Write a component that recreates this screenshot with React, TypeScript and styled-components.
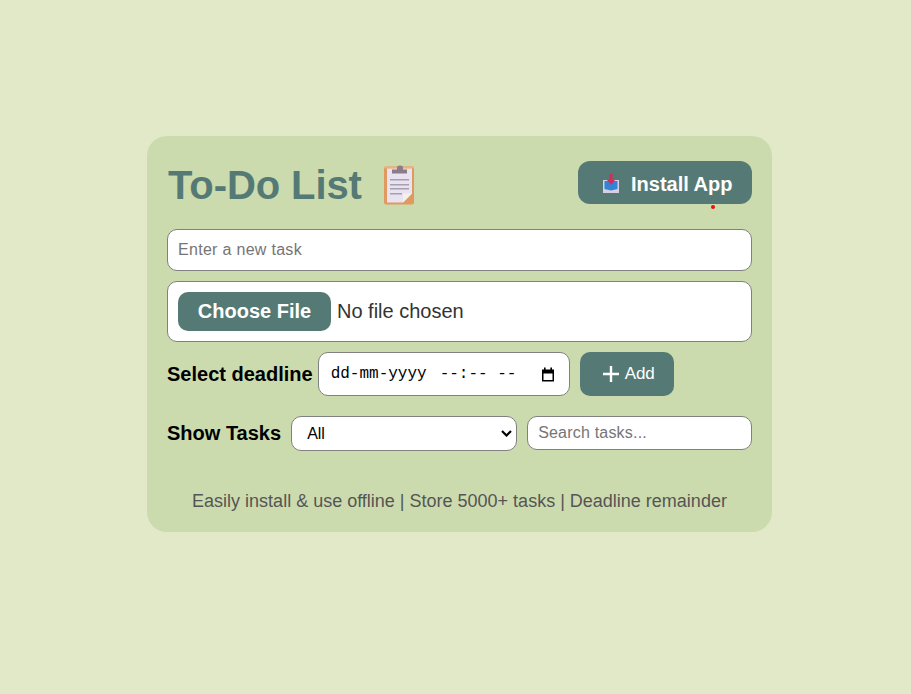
import React from 'react';
import styled, { createGlobalStyle } from 'styled-components';

const GlobalStyle = createGlobalStyle`
  html, body {
    margin: 0;
    height: 100%;
  }
  body {
    background-color: #e1e9c9;
    font-family: "Liberation Sans", Arial, sans-serif;
  }
  * {
    box-sizing: border-box;
  }
`;

const Page = styled.div`
  display: flex;
  justify-content: center;
  padding: 136px 139px 0 147px;
`;

const Card = styled.div`
  width: 625px;
  height: 396px;
  padding: 25px 20px 0;
  background-color: #ccdbae;
  border-radius: 20px;
`;

const Header = styled.div`
  display: flex;
  justify-content: space-between;
  align-items: flex-start;
  height: 68px;
`;

const Title = styled.h1`
  display: flex;
  align-items: center;
  gap: 21px;
  height: 48px;
  margin: 0 0 0 1px;
  font-size: 40px;
  font-weight: 700;
  letter-spacing: -0.1px;
  color: #557a75;
`;

const InstallButton = styled.button`
  position: relative;
  display: flex;
  align-items: center;
  gap: 11px;
  width: 174px;
  height: 43px;
  padding: 3px 0 0 24px;
  border: none;
  border-radius: 12px;
  background-color: #557a75;
  color: #fff;
  font-family: inherit;
  font-size: 20px;
  font-weight: 700;
`;

const RedDot = styled.span`
  position: absolute;
  left: 133px;
  top: 44px;
  width: 4px;
  height: 4px;
  border-radius: 50%;
  background-color: #f00d0d;
`;

const TextField = styled.input`
  display: block;
  width: 100%;
  height: 42px;
  padding: 0 10px;
  border: 1px solid #808080;
  border-radius: 10px;
  background: #fff;
  font-family: inherit;
  font-size: 16px;
  &::placeholder {
    color: #757575;
    letter-spacing: 0.3px;
  }
`;

const FileBox = styled.div`
  display: flex;
  align-items: center;
  gap: 6px;
  height: 61px;
  margin-top: 10px;
  padding: 0 10px;
  border: 1px solid #808080;
  border-radius: 10px;
  background: #fff;
  font-size: 20px;
  color: #333;
`;

const ChooseFile = styled.span`
  display: flex;
  align-items: center;
  justify-content: center;
  width: 153px;
  height: 39px;
  border-radius: 10px;
  background-color: #557a75;
  color: #fff;
  font-weight: 700;
`;

const Row = styled.div<{ $top: number }>`
  display: flex;
  align-items: center;
  gap: 10px;
  margin-top: ${(props) => props.$top}px;
`;

const Label = styled.label`
  flex-shrink: 0;
  font-size: 20px;
  font-weight: 700;
  color: #000;
  white-space: nowrap;
`;

const DateBox = styled.div`
  display: flex;
  align-items: center;
  width: 252px;
  height: 44px;
  margin-left: -5px;
  padding: 0 14px 0 12px;
  border: 1px solid #808080;
  border-radius: 10px;
  background: #fff;
  font-family: "Liberation Mono", monospace;
  font-size: 16px;
  color: #000;
`;

const DatePart = styled.span`
  margin-right: 13px;
`;

const TimePart = styled.span`
  flex: 1;
`;

const AddButton = styled.button`
  display: flex;
  align-items: center;
  justify-content: center;
  gap: 6px;
  width: 94px;
  height: 44px;
  padding: 0 0 0 4px;
  border: none;
  border-radius: 10px;
  background-color: #557a75;
  color: #fff;
  font-family: inherit;
  font-size: 17px;
  letter-spacing: -0.2px;
`;

const SelectWrap = styled.div`
  position: relative;
  flex-shrink: 0;
  width: 226px;
  height: 35px;
`;

const FilterSelect = styled.select`
  appearance: none;
  width: 100%;
  height: 100%;
  padding: 0 15px;
  border: 1px solid #808080;
  border-radius: 10px;
  background: #fff;
  color: #000;
  font-family: inherit;
  font-size: 16px;
`;

const SelectArrow = styled.svg`
  position: absolute;
  right: 5px;
  top: 14px;
  pointer-events: none;
`;

const SearchField = styled(TextField)`
  width: 225px;
  height: 34px;
  align-self: flex-start;
  &::placeholder {
    letter-spacing: 0.2px;
  }
`;

const Footer = styled.p`
  margin: 40px 0 0;
  text-align: center;
  font-size: 18px;
  color: #555;
`;

const ClipboardIcon = () => (
  <svg width="34" height="41" viewBox="0 0 34 41">
    <rect x="1" y="1.500" width="30" height="38" rx="2" fill="#e0995f" />
    <rect x="1.500" y="1.500" width="29" height="2" fill="#eeb27c" />
    <path d="M4 3.500h25v25l-9 9H4z" fill="#e8e2f1" />
    <path d="M20 37.500l9-9h-9z" fill="#f5f0ea" />
    <path d="M9 8.500V4.500h5V2.500a3 2 0 0 1 6 0V4.500h4v4z" fill="#8a7d8a" />
    <rect x="7" y="14" width="19" height="1.500" fill="#a59fae" />
    <rect x="7" y="19" width="19" height="1.500" fill="#a59fae" />
    <rect x="7" y="23" width="19" height="1.500" fill="#a59fae" />
    <rect x="7" y="28" width="12" height="1.500" fill="#a59fae" />
  </svg>
);

const InstallIcon = () => (
  <svg width="18" height="20" viewBox="0 1 18 20">
    <path d="M1 7h16v13H1z" fill="#d9cfe4" />
    <path d="M2.500 8h13v8l-6.500 1.500L2.500 16z" fill="#2f86d6" />
    <path d="M7.500 0h3v7H13l-4 5-4-5h2.500z" fill="#d42a5c" />
  </svg>
);

const CalendarIcon = () => (
  <svg width="14" height="15" viewBox="0 0 14 15">
    <path d="M1 2.500h12v12H1z M2.500 6.500v6.500h9V6.500z" fill="#000" fillRule="evenodd" />
    <rect x="3" y="0.500" width="1.600" height="2.500" fill="#000" />
    <rect x="9.400" y="0.500" width="1.600" height="2.500" fill="#000" />
  </svg>
);

const PlusIcon = () => (
  <svg width="16" height="16" viewBox="0 0 16 16">
    <path d="M6.800 0h2.400v6.800H16v2.400H9.200V16H6.800V9.200H0V6.800h6.800z" fill="#fff" />
  </svg>
);

const App = () => {
  return (
    <>
      <GlobalStyle />
      <Page>
        <Card>
          <Header>
            <Title>
              To-Do List <ClipboardIcon />
            </Title>
            <InstallButton>
              <InstallIcon />
              Install App
              <RedDot />
            </InstallButton>
          </Header>
          <TextField placeholder="Enter a new task" />
          <FileBox>
            <ChooseFile>Choose File</ChooseFile>
            No file chosen
          </FileBox>
          <Row $top={10}>
            <Label>Select deadline</Label>
            <DateBox>
              <DatePart>dd-mm-yyyy</DatePart>
              <TimePart>--:-- --</TimePart>
              <CalendarIcon />
            </DateBox>
            <AddButton>
              <PlusIcon />
              Add
            </AddButton>
          </Row>
          <Row $top={20}>
            <Label>Show Tasks</Label>
            <SelectWrap>
              <FilterSelect defaultValue="All">
                <option>All</option>
                <option>Pending</option>
                <option>Completed</option>
              </FilterSelect>
              <SelectArrow width="11" height="7" viewBox="0 0 11 7">
                <path d="M1 1l4.500 4.500L10 1" fill="none" stroke="#000" strokeWidth="2.200" />
              </SelectArrow>
            </SelectWrap>
            <SearchField placeholder="Search tasks..." />
          </Row>
          <Footer>Easily install &amp; use offline | Store 5000+ tasks | Deadline remainder</Footer>
        </Card>
      </Page>
    </>
  );
};

export default App;
